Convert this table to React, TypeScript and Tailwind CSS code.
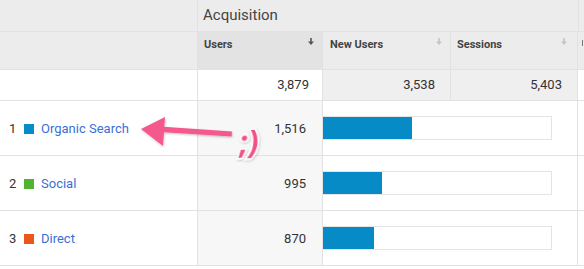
import React from "react";

const TOTAL = 3879;
const TRACK = 229;

const rows = [
  { rank: 1, name: "Organic Search", color: "bg-[#058dc7]", users: 1516 },
  { rank: 2, name: "Social", color: "bg-[#50b432]", users: 995 },
  { rank: 3, name: "Direct", color: "bg-[#ed561b]", users: 870 },
];

function SortArrow({ active }: { active?: boolean }) {
  return (
    <svg width="6" height="7" viewBox="0 0 6 7" className="mt-[1px]">
      <path
        d="M2.2 0h1.6v3.6H6L3 7 0 3.6h2.2z"
        fill={active ? "#555" : "#c4c4c4"}
      />
    </svg>
  );
}

export default function App() {
  return (
    <div className="relative w-[584px] h-[269px] overflow-hidden bg-white font-['Roboto','Liberation_Sans',sans-serif] text-[#333]">
      {/* Group header */}
      <div className="flex h-[32px] border-b border-[#e2e2e2] bg-[#ececec]">
        <div className="w-[198px] border-r border-[#e2e2e2]" />
        <div className="w-[381px] border-r border-[#e2e2e2] pl-[5px] flex items-center text-[15px] text-[#444]">
          Acquisition
        </div>
        <div className="flex-1" />
      </div>

      {/* Column headers */}
      <div className="flex h-[38px] border-b border-[#e2e2e2] bg-[#ececec] text-[11px] font-bold text-[#444]">
        <div className="w-[198px] border-r border-[#e2e2e2]" />
        <div className="w-[125px] border-r border-[#e2e2e2] bg-[#e3e3e3] flex justify-between pl-[6px] pr-[8px] pt-[5px]">
          <span>Users</span>
          <SortArrow active />
        </div>
        <div className="w-[128px] border-r border-[#e2e2e2] flex justify-between pl-[7px] pr-[8px] pt-[5px]">
          <span>New Users</span>
          <SortArrow />
        </div>
        <div className="w-[127px] border-r border-[#e2e2e2] flex justify-between pl-[6px] pr-[10px] pt-[5px]">
          <span>Sessions</span>
          <SortArrow />
        </div>
        <div className="flex-1 pl-[4px] pt-[8px]">
          <div className="w-[1px] h-[6px] bg-[#777]" />
        </div>
      </div>

      {/* Totals */}
      <div className="flex h-[31px] border-b border-[#e2e2e2] text-[13px]">
        <div className="w-[198px] border-r border-[#e2e2e2]" />
        <div className="w-[125px] border-r border-[#e2e2e2] flex items-center justify-end pr-[13px]">
          3,879
        </div>
        <div className="w-[128px] border-r border-[#e2e2e2] bg-[#efefef] flex items-center justify-end pr-[15px]">
          3,538
        </div>
        <div className="w-[127px] border-r border-[#e2e2e2] bg-[#efefef] flex items-center justify-end pr-[15px]">
          5,403
        </div>
        <div className="flex-1" />
      </div>

      {/* Rows */}
      {rows.map((r) => (
        <div key={r.rank} className="flex h-[55px] border-b border-[#e2e2e2] text-[13px]">
          <div className="w-[198px] border-r border-[#e2e2e2] flex items-center pl-[9px] pt-[1px]">
            <span className="w-[15px]">{r.rank}</span>
            <span className={`w-[10px] h-[10px] ${r.color} mr-[7px]`} />
            <span className="text-[#3b6fd6]">{r.name}</span>
          </div>
          <div className="w-[125px] border-r border-[#e2e2e2] bg-[#f7f7f7] flex items-center justify-end pr-[16px] pt-[1px]">
            {r.users.toLocaleString("en-US")}
          </div>
          <div className="w-[255px] border-r border-[#e2e2e2] flex items-center">
            <div className="w-[229px] h-[24px] border border-[#e4e4e4] border-l-0 bg-white">
              <div
                className="h-full bg-[#078bc6]"
                style={{ width: Math.round((r.users / TOTAL) * TRACK) }}
              />
            </div>
          </div>
          <div className="flex-1" />
        </div>
      ))}

      {/* Pink annotation */}
      <svg
        className="absolute left-[130px] top-[105px]"
        width="150"
        height="60"
        viewBox="0 0 150 60"
      >
        <defs>
          <filter id="sh" x="-20%" y="-20%" width="140%" height="140%">
            <feDropShadow dx="0.5" dy="1" stdDeviation="1" floodColor="#000" floodOpacity="0.25" />
          </filter>
        </defs>
        <g filter="url(#sh)">
          <path d="M30 21.5 L102 26.5 L101.6 31.5 L29.6 27 Z" fill="#f4598d" />
          <path d="M11 24 L35 12 L33 41 Z" fill="#f4598d" />
        </g>
        <text
          x="109"
          y="48"
          fontSize="32"
          fontWeight="700"
          fontStyle="italic"
          fontFamily="'Open Sans', sans-serif"
          fill="#f0508a"
          stroke="#fff"
          strokeWidth="3"
          paintOrder="stroke"
          filter="url(#sh)"
          transform="rotate(-4 122 40)"
        >
          ;)
        </text>
      </svg>
    </div>
  );
}
